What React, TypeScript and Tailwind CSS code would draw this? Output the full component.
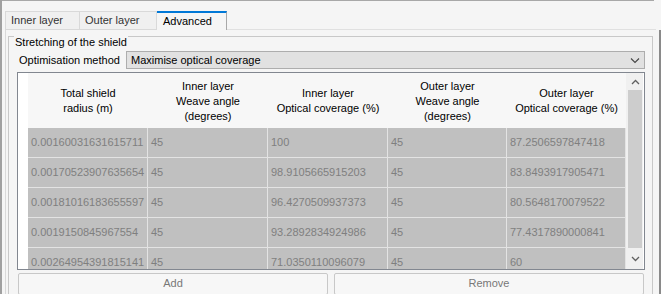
import React from "react";

const rows = [
  ["0.00160031631615711", "45", "100", "45", "87.2506597847418"],
  ["0.00170523907635654", "45", "98.9105665915203", "45", "83.8493917905471"],
  ["0.00181016183655597", "45", "96.4270509937373", "45", "80.5648170079522"],
  ["0.0019150845967554", "45", "93.2892834924986", "45", "77.4317890000841"],
  ["0.00264954391815141", "45", "71.0350110096079", "45", "60"],
];

const headers: string[][] = [
  ["Total shield", "radius (m)"],
  ["Inner layer", "Weave angle", "(degrees)"],
  ["Inner layer", "Optical coverage (%)"],
  ["Outer layer", "Weave angle", "(degrees)"],
  ["Outer layer", "Optical coverage (%)"],
];

const colW = ["w-[120px]", "w-[120px]", "w-[120px]", "w-[119px]", "w-[119px]"];

export default function App() {
  return (
    <div
      className="relative w-[661px] h-[294px] overflow-hidden bg-[#f5f5f5] text-[11px] text-black"
      style={{ fontFamily: '"Liberation Sans", Arial, sans-serif' }}
    >
      {/* outer frame */}
      <div className="absolute left-0 top-0 w-[654px] h-px bg-[#a8a8a8]" />
      <div className="absolute left-0 top-0 w-[2px] h-[294px] bg-[#a0a0a0]" />
      <div className="absolute left-[659px] top-[30px] w-[2px] h-[264px] bg-[#8a8a8a]" />

      <div className="flex flex-col pl-[5px] pt-[11px] w-[656px]">
        {/* tabs */}
        <div className="flex h-[19px] items-stretch leading-none">
          <div className="w-[75px] border border-[#d9d9d9] bg-[#f0f0f0] text-[#333] flex items-center pl-[5px] pb-[1px]">
            Inner layer
          </div>
          <div className="w-[77px] border border-l-0 border-[#d9d9d9] bg-[#f0f0f0] text-[#333] flex items-center pl-[5px] pb-[1px]">
            Outer layer
          </div>
          <div className="w-[70px] border-t-2 border-t-[#0078d7] border-r border-r-[#a8a8a8] bg-[#f5f5f5] flex items-center pl-[6px] pb-[1px]">
            Advanced
          </div>
          <div className="flex-1 border-b border-[#e0e0e0]" />
        </div>

        {/* pane */}
        <div className="border-l border-[#d9d9d9] pl-[2px] pt-[6px] h-[270px]">
          {/* group box */}
          <div className="relative border border-[#c8c8c8] w-[645px] h-[280px] pt-[14px] pl-[8px]">
            <div className="absolute left-[5px] -top-[1px] bg-[#f5f5f5] px-[1px] leading-[13px]">
              Stretching of the shield
            </div>

            <div className="flex items-center h-[18px] mb-[3px]">
              <div className="w-[109px] pl-[2px] leading-none">Optimisation method</div>
              <div className="relative w-[519px] h-[18px] border border-[#adadad] bg-[#e1e1e1] flex items-center pl-[4px] leading-none">
                Maximise optical coverage
                <svg className="absolute right-[4px] top-[5px]" width="10" height="7" viewBox="0 0 10 7">
                  <path d="M1 1.5 L5 5.5 L9 1.5" fill="none" stroke="#444" strokeWidth="1.1" />
                </svg>
              </div>
            </div>

            {/* table */}
            <div className="flex w-[628px] h-[198px] border border-[#828790] bg-white">
              <div className="flex flex-col">
                <div className="flex h-[55px]">
                  <div className="w-[10px] bg-white" />
                  {headers.map((h, i) => (
                    <div
                      key={i}
                      className={`${colW[i]} bg-[#f7f7f7] flex flex-col items-center justify-center leading-[15px] pt-[1px]`}
                    >
                      {h.map((l, j) => (
                        <div key={j}>{l}</div>
                      ))}
                    </div>
                  ))}
                </div>
                <div className="flex flex-col h-[141px] overflow-hidden">
                  {rows.map((r, ri) => (
                    <div key={ri} className="flex h-[30px] shrink-0">
                      <div className="w-[10px] bg-white" />
                      {r.map((c, ci) => (
                        <div
                          key={ci}
                          className={`${colW[ci]} h-[30px] bg-[#c0c0c0] text-[#7f7f7f] border-b border-r border-[#e3e3e3] flex items-center pl-[3px] pb-[1px] leading-none whitespace-nowrap overflow-hidden`}
                        >
                          {c}
                        </div>
                      ))}
                    </div>
                  ))}
                </div>
              </div>
              {/* scrollbar */}
              <div className="flex flex-col w-[17px] bg-[#f0f0f0] border-l border-[#f0f0f0]">
                <div className="h-[17px] flex items-center justify-center">
                  <svg width="9" height="6" viewBox="0 0 9 6">
                    <path d="M1 5 L4.5 1.5 L8 5" fill="none" stroke="#606060" strokeWidth="1.3" />
                  </svg>
                </div>
                <div className="flex-1 mx-[1px] bg-[#cdcdcd]" />
                <div className="h-[21px] flex items-center justify-center">
                  <svg width="9" height="6" viewBox="0 0 9 6">
                    <path d="M1 1 L4.5 4.5 L8 1" fill="none" stroke="#606060" strokeWidth="1.3" />
                  </svg>
                </div>
              </div>
            </div>

            {/* buttons */}
            <div className="flex gap-[6px] mt-[3px] pl-[1px]">
              <div className="w-[310px] h-[22px] border border-[#c8c8c8] rounded-[2px] bg-[#f7f7f7] text-[#787878] flex items-center justify-center leading-none pb-[1px]">
                Add
              </div>
              <div className="w-[310px] h-[22px] border border-[#c8c8c8] rounded-[2px] bg-[#f7f7f7] text-[#787878] flex items-center justify-center leading-none pb-[1px]">
                Remove
              </div>
            </div>
          </div>
        </div>
      </div>
    </div>
  );
}
